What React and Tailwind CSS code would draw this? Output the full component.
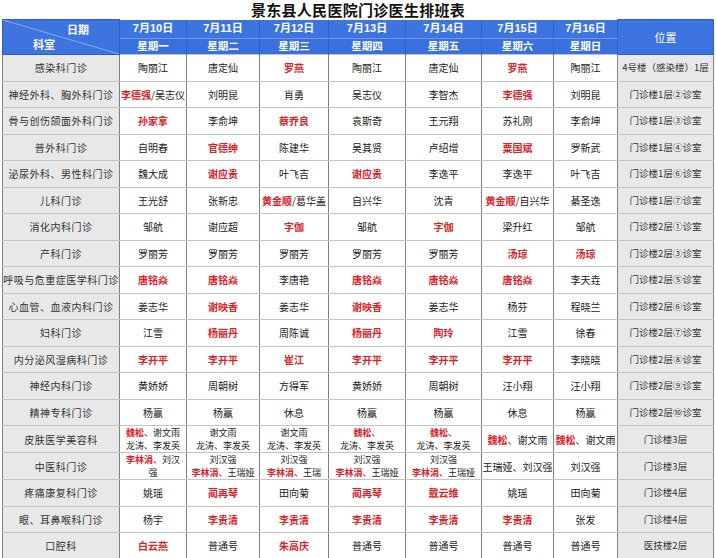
import React from "react";

const dates = [
  ["7月10日", "星期一"],
  ["7月11日", "星期二"],
  ["7月12日", "星期三"],
  ["7月13日", "星期四"],
  ["7月14日", "星期五"],
  ["7月15日", "星期六"],
  ["7月16日", "星期日"],
];

const widths = ["w-[117px]", "w-[67px]", "w-[73px]", "w-[69px]", "w-[77px]", "w-[76px]", "w-[72px]", "w-[64px]", "w-[96px]"];

// *名字* = red
const rows = [
  ["感染科门诊", "陶丽江", "唐定仙", "*罗燕*", "陶丽江", "唐定仙", "*罗燕*", "陶丽江", "4号楼（感染楼）1层"],
  ["神经外科、胸外科门诊", "*李德强*/吴志仪", "刘明昆", "肖勇", "吴志仪", "李智杰", "*李德强*", "刘明昆", "门诊楼1层②诊室"],
  ["骨与创伤颌面外科门诊", "*孙家拿*", "李俞坤", "*蔡乔良*", "袁斯奇", "王元翔", "苏礼刚", "李俞坤", "门诊楼1层③诊室"],
  ["普外科门诊", "自明春", "*官德绅*", "陈建华", "吴其贤", "卢绍增", "*粟国斌*", "罗新武", "门诊楼1层④诊室"],
  ["泌尿外科、男性科门诊", "魏大成", "*谢应贵*", "叶飞吉", "*谢应贵*", "李逸平", "李逸平", "叶飞吉", "门诊楼1层⑥诊室"],
  ["儿科门诊", "王光舒", "张新忠", "*黄金顺*/葛华盖", "自兴华", "沈青", "*黄金顺*/自兴华", "綦圣逸", "门诊楼1层⑦诊室"],
  ["消化内科门诊", "邹航", "谢应超", "*字伽*", "邹航", "*字伽*", "梁升红", "邹航", "门诊楼2层①诊室"],
  ["产科门诊", "罗丽芳", "罗丽芳", "罗丽芳", "罗丽芳", "罗丽芳", "*汤琼*", "*汤琼*", "门诊楼2层③诊室"],
  ["呼吸与危重症医学科门诊", "*唐铭焱*", "*唐铭焱*", "李唐艳", "*唐铭焱*", "*唐铭焱*", "*唐铭焱*", "李天垚", "门诊楼2层⑤诊室"],
  ["心血管、血液内科门诊", "姜志华", "*谢映香*", "姜志华", "*谢映香*", "姜志华", "杨芬", "程晓兰", "门诊楼2层⑥诊室"],
  ["妇科门诊", "江雪", "*杨丽丹*", "周陈诚", "*杨丽丹*", "*陶玲*", "江雪", "徐春", "门诊楼2层⑦诊室"],
  ["内分泌风湿病科门诊", "*李开平*", "*李开平*", "*崔江*", "*李开平*", "*李开平*", "*李开平*", "李晓晓", "门诊楼2层⑧诊室"],
  ["神经内科门诊", "黄娇娇", "周朝树", "方得军", "黄娇娇", "周朝树", "汪小翔", "汪小翔", "门诊楼2层⑨诊室"],
  ["精神专科门诊", "杨赢", "杨赢", "休息", "杨赢", "杨赢", "休息", "杨赢", "门诊楼2层⑩诊室"],
  ["皮肤医学美容科", "*魏松*、谢文雨\n龙涛、李发英", "谢文雨\n龙涛、李发英", "谢文雨\n龙涛、李发英", "*魏松*、\n龙涛、李发英", "*魏松*、\n龙涛、李发英", "*魏松*、谢文雨", "*魏松*、谢文雨", "门诊楼3层"],
  ["中医科门诊", "*李林涓*、刘汉\n强", "刘汉强\n*李林涓*、王瑞娅", "刘汉强\n*李林涓*、王瑞", "刘汉强\n*李林涓*、王瑞娅", "刘汉强\n*李林涓*、王瑞娅", "王瑞娅、刘汉强", "刘汉强", "门诊楼3层"],
  ["疼痛康复科门诊", "姚瑶", "*蔺再琴*", "田向菊", "*蔺再琴*", "*戴云维*", "姚瑶", "田向菊", "门诊楼4层"],
  ["眼、耳鼻喉科门诊", "杨宇", "*李贵清*", "*李贵清*", "*李贵清*", "*李贵清*", "*李贵清*", "张发", "门诊楼4层"],
  ["口腔科", "*白云燕*", "普通号", "*朱高庆*", "普通号", "普通号", "普通号", "普通号", "医技楼2层"],
];

const Names = ({ text }) => {
  const lines = text.split("\n");
  const two = lines.length > 1;
  return lines.map((line, i) => (
    <div key={i} className={two ? "whitespace-nowrap text-[9px] leading-[13px]" : "whitespace-nowrap"}>
      {line.split("*").map((part, j) =>
        j % 2 === 1 ? (
          <span key={j} className="text-[#d9232b] font-semibold">{part}</span>
        ) : (
          <span key={j}>{part}</span>
        )
      )}
    </div>
  ));
};

const App = () => {
  return (
    <div className="w-[716px] h-[558px] bg-white overflow-hidden font-['Noto_Sans_CJK_SC',sans-serif]">
      <div className="h-[19px] flex items-center justify-center">
        <h1 className="text-[15px] leading-[19px] font-bold text-[#111] tracking-[0.3px]">
          景东县人民医院门诊医生排班表
        </h1>
      </div>
      <table className="ml-[2px] w-[711px] table-fixed border-collapse text-[10px] text-[#222]">
        <colgroup>
          {widths.map((w, i) => (
            <col key={i} className={w} />
          ))}
        </colgroup>
        <thead>
          <tr className="h-[18px] bg-[#3d74e0] text-white">
            <th rowSpan={2} className="relative p-0 border border-[#2d5fc6] font-bold">
              <svg className="absolute inset-0 w-full h-full" viewBox="0 0 117 34" preserveAspectRatio="none">
                <line x1="0" y1="0" x2="117" y2="34" stroke="#9db8ee" strokeWidth="0.8" />
              </svg>
              <div className="relative flex flex-col h-[34px] text-[11px] leading-[15px]">
                <span className="pl-[34px] pt-[2px]">日期</span>
                <span className="pr-[34px]">科室</span>
              </div>
            </th>
            {dates.map(([d]) => (
              <th key={d} className="p-0 border-x border-[#2d5fc6] border-b border-b-[#6f97e8] text-[11px] font-bold font-['Liberation_Sans','Noto_Sans_CJK_SC',sans-serif]">
                {d}
              </th>
            ))}
            <th rowSpan={2} className="p-0 border border-[#2d5fc6] text-[11px] font-normal">
              位置
            </th>
          </tr>
          <tr className="h-[16px] bg-[#3a70dc] text-white">
            {dates.map(([d, w]) => (
              <th key={w} className="p-0 border-x border-[#2d5fc6] text-[10.5px] leading-[14px] font-bold">
                {w}
              </th>
            ))}
          </tr>
        </thead>
        <tbody>
          {rows.map((r, i) => (
            <tr key={i} className="h-[26.5px]">
              {r.map((c, j) => (
                <td
                  key={j}
                  className={`p-0 text-center leading-[13px] border-x border-x-[#808080] border-y border-y-[#c4c4c4] ${
                    j === 0
                      ? "bg-[#e8e8e8] tracking-[0.5px] text-[#333]"
                      : j === 8
                      ? "bg-[#e8e8e8] text-[9.5px] text-[#333]"
                      : "bg-white"
                  }`}
                >
                  {j === 0 ? c : <Names text={c} />}
                </td>
              ))}
            </tr>
          ))}
        </tbody>
      </table>
    </div>
  );
};

export default App;
